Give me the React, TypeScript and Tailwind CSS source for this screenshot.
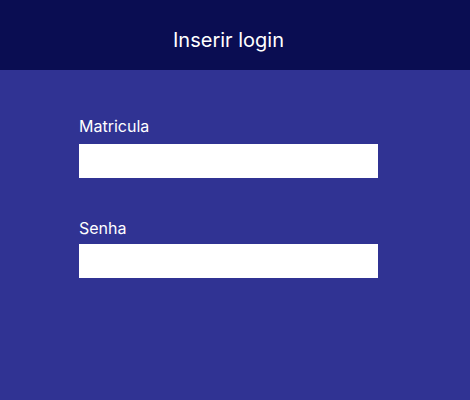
export default function App() {
  return (
    <div className="min-h-[400px] w-[470px] bg-[#303393] font-['Inter',sans-serif] text-white">
      {/* topo */}
      <header className="flex h-[70px] justify-center bg-[#0a0d52] pr-[13px] pt-[27px]">
        <h1 className="text-[20px] font-normal leading-[26px]">Inserir login</h1>
      </header>

      <form className="ml-[79px] flex w-[299px] flex-col pt-[46px]">
        <label className="mb-[8px] text-[16px] leading-[20px]">Matricula</label>
        <input type="text" className="h-[34px] w-full bg-white text-black outline-none" />

        <label className="mb-[6px] mt-[40px] text-[16px] leading-[20px]">Senha</label>
        <input type="password" className="h-[34px] w-full bg-white text-black outline-none" />
      </form>
    </div>
  );
}
